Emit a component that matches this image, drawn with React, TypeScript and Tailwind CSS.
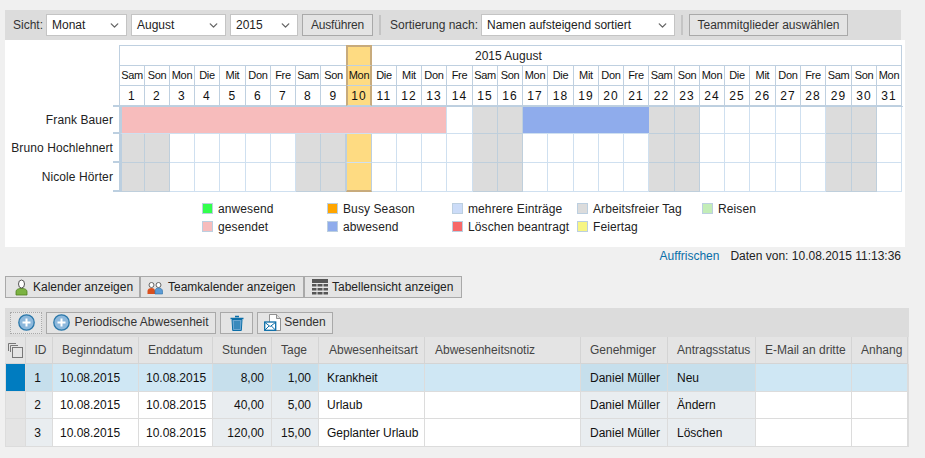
import { ChevronDown } from "lucide-react";

const weekdays = ["Sam", "Son", "Mon", "Die", "Mit", "Don", "Fre"];
const days = Array.from({ length: 31 }, (_, i) => ({ nr: i + 1, name: weekdays[i % 7] }));
const isWeekend = (nr: number) => [1, 2, 8, 9, 15, 16, 22, 23, 29, 30].includes(nr);

const calCols =
  "grid grid-cols-[25px_25px_25px_25px_26px_25px_25px_25px_25px_26px_25px_25px_25px_26px_25px_25px_25px_26px_25px_25px_25px_26px_25px_25px_25px_26px_25px_25px_26px_25px_25px]";

const legend = [
  { label: "anwesend", color: "bg-[#33ff4d]" },
  { label: "Busy Season", color: "bg-[#ffa500]" },
  { label: "mehrere Einträge", color: "bg-[#ccdcf8]" },
  { label: "Arbeitsfreier Tag", color: "bg-[#dcdcdc]" },
  { label: "Reisen", color: "bg-[#c3edb7]" },
  { label: "gesendet", color: "bg-[#f7bcbc]" },
  { label: "abwesend", color: "bg-[#8facec]" },
  { label: "Löschen beantragt", color: "bg-[#f76868]" },
  { label: "Feiertag", color: "bg-[#f7f583]" },
];

const tableCols =
  "grid grid-cols-[21px_27px_86px_74px_59px_47px_106px_156px_87px_88px_96px_56px]";

const headers = [
  "ID",
  "Beginndatum",
  "Enddatum",
  "Stunden",
  "Tage",
  "Abwesenheitsart",
  "Abwesenheitsnotiz",
  "Genehmiger",
  "Antragsstatus",
  "E-Mail an dritte",
  "Anhang",
];

const rows = [
  { id: "1", h: "h-[28px]", std: "8,00", tage: "1,00", art: "Krankheit", status: "Neu", selected: true },
  { id: "2", h: "h-[27px]", std: "40,00", tage: "5,00", art: "Urlaub", status: "Ändern", selected: false },
  { id: "3", h: "h-[28px]", std: "120,00", tage: "15,00", art: "Geplanter Urlaub", status: "Löschen", selected: false },
];

function PlusIcon() {
  return (
    <svg width="17" height="17" viewBox="0 0 17 17">
      <circle cx="8.5" cy="8.5" r="7.7" fill="#8db8dc" stroke="#2a77a9" strokeWidth="1.3" />
      <path d="M8.5 4.5v8M4.5 8.5h8" stroke="#fff" strokeWidth="2" />
    </svg>
  );
}

function PersonIcon() {
  return (
    <svg width="13" height="17" viewBox="0 0 13 17">
      <path d="M1 16v-3.5C1 10.5 3 10 4.5 9.5h4c1.5.5 3.5 1 3.5 3V16z" fill="#7cb342" stroke="#4e7d20" strokeWidth="0.8" />
      <ellipse cx="6.5" cy="5" rx="3" ry="4" fill="#fff" stroke="#555" strokeWidth="1" />
    </svg>
  );
}

function TeamIcon() {
  return (
    <svg width="16" height="15" viewBox="0 0 16 15">
      <circle cx="4.5" cy="5" r="2.5" fill="#fff" stroke="#666" />
      <circle cx="11.5" cy="5" r="2.5" fill="#fff" stroke="#666" />
      <path d="M0.5 14v-3c0-2 2-3 4-3s3.5 1 3.5 3v3z" fill="#d9501e" />
      <path d="M8 14v-3c0-2 1.5-3 3.5-3s4 1 4 3v3z" fill="#5b9bd5" stroke="#2a6ea8" strokeWidth="0.6" />
    </svg>
  );
}

function TableIcon() {
  return (
    <svg width="16" height="16" viewBox="0 0 16 16" fill="#555">
      <rect x="0" y="0" width="16" height="4" />
      <rect x="0" y="5" width="4.5" height="2.5" />
      <rect x="5.5" y="5" width="5" height="2.5" />
      <rect x="11.5" y="5" width="4.5" height="2.5" />
      <rect x="0" y="9" width="4.5" height="2.5" />
      <rect x="5.5" y="9" width="5" height="2.5" />
      <rect x="11.5" y="9" width="4.5" height="2.5" />
      <rect x="0" y="13" width="4.5" height="2.5" />
      <rect x="5.5" y="13" width="5" height="2.5" />
      <rect x="11.5" y="13" width="4.5" height="2.5" />
    </svg>
  );
}

function TrashIcon() {
  return (
    <svg width="14" height="16" viewBox="0 0 14 16" fill="none" stroke="#0b6ea8">
      <path d="M5 1.5h4M0.5 3.5h13" strokeWidth="1.5" />
      <path d="M2 4.5l0.7 11h8.600l0.7-11z" fill="#6ba6d1" strokeWidth="1" />
      <path d="M5 6v8M7 6v8M9 6v8" stroke="#0b6ea8" strokeWidth="1" />
    </svg>
  );
}

function MailIcon() {
  return (
    <svg width="17" height="17" viewBox="0 0 17 17">
      <path d="M5.5 0.5h7l4 4v12h-11z" fill="#fff" stroke="#777" strokeWidth="0.8" />
      <path d="M12.5 0.5v4h4" fill="#ddd" stroke="#777" strokeWidth="0.8" />
      <rect x="0.7" y="8" width="11" height="8.300" fill="#fff" stroke="#0b6ea8" strokeWidth="1.3" />
      <path d="M1 8.5l5.200 4 5.200-4M1 16l4-4M11.400 16l-4-4" fill="none" stroke="#0b6ea8" strokeWidth="1" />
    </svg>
  );
}

function CopyIcon() {
  return (
    <svg width="15" height="15" viewBox="0 0 15 15" fill="none" stroke="#777">
      <path d="M0.5 8V0.5H8M2.5 9V2.5H10" />
      <rect x="4.5" y="4.5" width="10" height="10" strokeWidth="1" />
    </svg>
  );
}

function Select({ label, width }: { label: string; width: string }) {
  return (
    <div className={`flex h-[22px] items-center justify-between border border-[#c4c4c4] bg-white pr-[5px] pl-[5px] ${width}`}>
      <span className="pb-px text-[#222]">{label}</span>
      <ChevronDown size={13} strokeWidth={2.5} className="text-[#666]" />
    </div>
  );
}

function ToolButton({ children, width }: { children: React.ReactNode; width: string }) {
  return (
    <button className={`flex h-[22px] items-center justify-center border border-[#a9a9a9] bg-[#e4e4e4] text-[#333] ${width}`}>
      {children}
    </button>
  );
}

function DayCell({ nr, children }: { nr: number; children: React.ReactNode }) {
  const today = nr === 10;
  return (
    <div
      className={`flex h-[20px] items-center justify-center border-b text-[#111] ${
        today
          ? "border-x-2 border-b-[#bfd0e0] border-x-[#c8ab7c] bg-[#fedb82]"
          : "border-r border-[#bfd0e0]"
      } ${nr === 9 ? "border-r-0" : ""}`}
    >
      {children}
    </div>
  );
}

function BodyCell({ nr, last }: { nr: number; last?: boolean }) {
  if (nr === 10) {
    return (
      <div
        className={`border-x border-x-[#bccfe0] bg-[#fedb82] ${
          last ? "border-b-2 border-b-[#c8ab7c]" : "border-b border-b-[#cfe0f0]"
        }`}
      />
    );
  }
  return (
    <div
      className={`border-r border-b ${
        isWeekend(nr) ? "border-[#bfcfdc] bg-[#dcdcdc]" : "border-[#cfe0f0] bg-white"
      } ${nr === 1 ? "border-l-2 border-l-[#bccfe0]" : ""}`}
    />
  );
}

function NameRow({ name, height }: { name: string; height: string }) {
  return (
    <div className={`flex ${height}`}>
      <div className="flex flex-1 items-center justify-end pb-[2px] whitespace-nowrap tracking-[0.1px] text-[#222]">{name}</div>
      <div className="w-[6px] border-b-2 border-[#bccfe0]" />
    </div>
  );
}

export default function App() {
  return (
    <div className="h-[458px] w-[925px] overflow-hidden bg-[#f0f0f0] pt-[10px] pl-[5px] font-['Liberation_Sans',Arial,sans-serif] text-[12px] leading-none">
      {/* Filterleiste */}
      <div className="flex h-[30px] w-[896px] items-center bg-[#dcdcdc] pl-[8px] text-[#333]">
        <span className="mr-[3px] w-[30px] pb-px">Sicht:</span>
        <Select label="Monat" width="w-[81px]" />
        <div className="w-[4px]" />
        <Select label="August" width="w-[95px]" />
        <div className="w-[4px]" />
        <Select label="2015" width="w-[68px]" />
        <div className="w-[4px]" />
        <ToolButton width="w-[71px]">
          <span className="pb-px tracking-[-0.2px]">Ausführen</span>
        </ToolButton>
        <div className="mr-[9px] ml-[6px] h-[20px] w-[2px] bg-[#c4c4c4]" />
        <span className="w-[91px] pb-px">Sortierung nach:</span>
        <Select label="Namen aufsteigend sortiert" width="w-[194px]" />
        <div className="mr-[6px] ml-[6px] h-[20px] w-[2px] bg-[#c4c4c4]" />
        <ToolButton width="w-[159px]">
          <span className="pb-px">Teammitglieder auswählen</span>
        </ToolButton>
      </div>

      {/* Kalender */}
      <div className="h-[207px] w-[900px] bg-white pt-[5px]">
        <div className="flex">
          <div className="w-[114px]">
            <div className="h-[61px]" />
            <div className="-mt-[1px] ml-[108px] h-[2px] bg-[#bccfe0]" />
            <NameRow name="Frank Bauer" height="h-[27px]" />
            <NameRow name="Bruno Hochlehnert" height="h-[29px]" />
            <NameRow name="Nicole Hörter" height="h-[29px]" />
          </div>
          <div className="w-[785px]">
            <div className={`${calCols} w-[783px] border-t border-l border-[#bfd0e0] text-[11px] tracking-[-0.3px]`}>
              <div className="col-span-9 h-[20px] border-b border-[#bfd0e0]" />
              <div className="-mt-px h-[21px] border-x-2 border-t-2 border-b border-x-[#c8ab7c] border-t-[#c8ab7c] border-b-[#bfd0e0] bg-[#fedb82]" />
              <div className="col-span-21 flex h-[20px] items-center border-r border-b border-[#bfd0e0] pl-[103px] text-[12px] tracking-normal text-[#222]">
                2015 August
              </div>
              {days.map((d) => (
                <DayCell key={`w${d.nr}`} nr={d.nr}>
                  {d.name}
                </DayCell>
              ))}
              {days.map((d) => (
                <DayCell key={`n${d.nr}`} nr={d.nr}>
                  <span className="text-[12px] tracking-[1.2px]">{d.nr}</span>
                </DayCell>
              ))}
            </div>
            <div className="h-[1px] w-[784px] bg-[#bccfe0]" />
            <div className={`${calCols} w-[783px] border-l border-[#bccfe0] [grid-template-rows:27px_29px_29px]`}>
              <div className="col-span-13 border-r border-b border-[#cfe0f0] border-l-2 border-l-[#bccfe0] bg-[#f7bcbc]" />
              <BodyCell nr={14} />
              <BodyCell nr={15} />
              <BodyCell nr={16} />
              <div className="col-span-5 border-b border-[#cfe0f0] bg-[#8facec]" />
              {[22, 23, 24, 25, 26, 27, 28, 29, 30, 31].map((nr) => (
                <BodyCell key={`a${nr}`} nr={nr} />
              ))}
              {days.map((d) => (
                <BodyCell key={`b${d.nr}`} nr={d.nr} />
              ))}
              {days.map((d) => (
                <BodyCell key={`c${d.nr}`} nr={d.nr} last />
              ))}
            </div>
          </div>
        </div>

        {/* Legende */}
        <div className="mt-[11px] ml-[197px] grid grid-cols-[125px_125px_125px_125px_125px] gap-y-[7px]">
          {legend.map((item) => (
            <div key={item.label} className="flex h-[11px] items-center">
              <div className={`mr-[5px] h-[11px] w-[11px] border border-[#bccfe0] ${item.color}`} />
              <span className="pt-px tracking-[0.1px] text-[#222]">{item.label}</span>
            </div>
          ))}
        </div>
      </div>

      {/* Auffrischen */}
      <div className="flex h-[29px] w-[896px] items-start justify-end pt-[3px]">
        <a className="mr-[11px] text-[#0a6ea8]">Auffrischen</a>
        <span className="text-[#222]">Daten von: 10.08.2015 11:13:36</span>
      </div>

      {/* Ansichten */}
      <div className="flex h-[22px] text-[#222]">
        <button className="flex w-[135px] items-center gap-[5px] border border-[#a9a9a9] bg-[#e4e4e4] pl-[9px]">
          <PersonIcon />
          <span className="pb-px">Kalender anzeigen</span>
        </button>
        <button className="flex w-[164px] items-center gap-[5px] border border-[#a9a9a9] bg-[#e4e4e4] pl-[6px]">
          <TeamIcon />
          <span className="pb-px">Teamkalender anzeigen</span>
        </button>
        <button className="flex w-[158px] items-center gap-[4px] border border-[#a9a9a9] bg-[#e4e4e4] pl-[7px]">
          <TableIcon />
          <span className="pb-px">Tabellensicht anzeigen</span>
        </button>
      </div>

      {/* Abwesenheiten */}
      <div className="mt-[10px] w-[904px] bg-[#dcdcdc]">
        <div className="flex h-[29px] items-center gap-[4px] pl-[5px]">
          <ToolButton width="w-[32px] border-dotted border-[#222]">
            <PlusIcon />
          </ToolButton>
          <ToolButton width="w-[170px] gap-[4px]">
            <PlusIcon />
            <span className="pb-[2px]">Periodische Abwesenheit</span>
          </ToolButton>
          <ToolButton width="w-[33px]">
            <TrashIcon />
          </ToolButton>
          <ToolButton width="w-[76px] gap-[3px]">
            <MailIcon />
            <span className="pb-[2px]">Senden</span>
          </ToolButton>
        </div>
        <div className={`${tableCols} bg-[#e4e4e4] text-[#444]`}>
          <div className="flex h-[27px] items-center justify-center border-r border-b border-[#d4d4d4] pl-px">
            <CopyIcon />
          </div>
          {headers.map((h, i) => (
            <div
              key={h}
              className={`flex h-[27px] items-center border-r border-b border-[#d4d4d4] ${
                i === 0 ? "justify-center pl-[3px]" : i === 5 || i === 6 ? "pl-[10px]" : "pl-[9px]"
              }`}
            >
              {h}
            </div>
          ))}
        </div>
        {rows.map((r) => {
          const ro = r.selected ? "bg-[#c6dfec]" : "bg-[#e9edf0]";
          const rw = r.selected ? "bg-[#cfe7f4]" : "bg-white";
          const cell = `flex items-center border-r border-b border-[#dcdcdc] text-[#111] ${r.h}`;
          return (
            <div key={r.id} className={tableCols}>
              <div className={`${r.h} border-x border-b border-[#dcdcdc] ${r.selected ? "bg-[#007cc0]" : "bg-[#e4e4e4]"}`} />
              <div className={`${cell} justify-center pr-[3px] ${ro}`}>{r.id}</div>
              <div className={`${cell} pl-[7px] ${rw}`}>10.08.2015</div>
              <div className={`${cell} pl-[7px] ${rw}`}>10.08.2015</div>
              <div className={`${cell} justify-end pr-[7px] ${ro}`}>{r.std}</div>
              <div className={`${cell} justify-end pr-[7px] ${ro}`}>{r.tage}</div>
              <div className={`${cell} pl-[8px] ${rw}`}>{r.art}</div>
              <div className={`${cell} ${rw}`} />
              <div className={`${cell} pl-[9px] ${ro}`}>Daniel Müller</div>
              <div className={`${cell} pl-[9px] ${ro}`}>{r.status}</div>
              <div className={`${cell} ${rw}`} />
              <div className={`${cell} ${rw}`} />
            </div>
          );
        })}
      </div>
    </div>
  );
}
